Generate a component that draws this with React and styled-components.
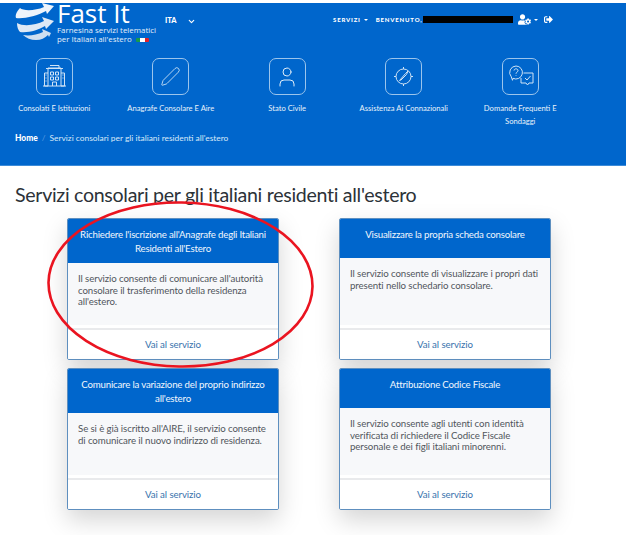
import React from 'react'
import styled, { createGlobalStyle } from 'styled-components'
import { ChevronDown, Pen, User } from 'lucide-react'
import { FaUserCog, FaSignOutAlt } from 'react-icons/fa'

const Global = createGlobalStyle`
  html, body { margin: 0; padding: 0; background: #fff; }
  body { font-family: "Lato", "Open Sans", sans-serif; }
`

const Page = styled.div`
  position: relative;
  width: 626px;
  height: 535px;
  overflow: hidden;
  padding-top: 3px;
  box-sizing: border-box;
`

const Hero = styled.header`
  background: #0066cc;
  height: 163px;
  color: #fff;
  border-bottom: 1px solid #3d8bd8;
  box-sizing: border-box;
`

const TopBar = styled.div`
  display: flex;
  align-items: flex-start;
  height: 44px;
  padding-left: 15px;
`

const Logo = styled.div`
  display: flex;
  width: 150px;
`

const LogoText = styled.div`
  display: flex;
  flex-direction: column;
`

const LogoName = styled.div`
  font-family: "Open Sans", sans-serif;
  font-size: 26px;
  line-height: 26px;
  height: 26px;
  margin-top: -3px;
  font-weight: 500;
`

const LogoSub = styled.div`
  font-family: "Open Sans", sans-serif;
  font-size: 7.9px;
  line-height: 9px;
  white-space: nowrap;
  color: #e6f0fa;
`

const Flag = styled.span`
  display: inline-block;
  width: 13px;
  height: 4px;
  margin-left: 4px;
  border-radius: 1px;
  background: linear-gradient(90deg, #1a9a4a 33%, #fff 33%, #fff 66%, #e0202a 66%);
`

const Lang = styled.div`
  display: flex;
  align-items: center;
  gap: 10px;
  padding-top: 13px;
  font-size: 7.5px;
  line-height: 10px;
  font-weight: 900;
  width: 168px;
`

const UserBar = styled.div`
  display: flex;
  align-items: center;
  padding-top: 10px;
  font-size: 6px;
  line-height: 9px;
  font-weight: 900;
  letter-spacing: 0.82px;
  white-space: nowrap;
`

const Caret = styled.span`
  display: inline-block;
  width: 0;
  height: 0;
  margin: 0 ${p => p.$right}px 0 3px;
  border-left: 2px solid transparent;
  border-right: 2px solid transparent;
  border-top: 2px solid #fff;
`

const Redacted = styled.span`
  display: block;
  width: 90px;
  height: 7px;
  background: #000;
  margin: 0 5px 0 1px;
`

const Nav = styled.nav`
  display: grid;
  grid-template-columns: repeat(5, 116.5px);
  margin-left: -4px;
  margin-top: 11px;
`

const NavItem = styled.a`
  display: flex;
  flex-direction: column;
  align-items: center;
  text-align: center;
  color: #fff;
`

const IconBox = styled.span`
  display: flex;
  align-items: center;
  justify-content: center;
  width: 35px;
  height: 35px;
  border: 1px solid #9cc5ec;
  border-radius: 7px;
`

const NavLabel = styled.span`
  margin-top: 7px;
  height: 25px;
  font-size: 7.6px;
  line-height: 12.5px;
  width: 100px;
  color: #e8f2fb;
`

const Crumbs = styled.div`
  display: flex;
  gap: 4px;
  margin: 5px 0 0 15px;
  font-size: 8.4px;
  line-height: 12px;
  color: #d9e9f8;
`

const CrumbHome = styled.strong`
  color: #fff;
  font-weight: 900;
`

const CrumbSep = styled.span`
  color: #5b9ce0;
`

const Title = styled.h1`
  margin: 16px 0 0 15px;
  height: 36px;
  font-size: 19.6px;
  line-height: 26px;
  font-weight: 400;
  letter-spacing: -0.3px;
  color: #2c3238;
  white-space: nowrap;
`

const Grid = styled.div`
  display: grid;
  grid-template-columns: repeat(2, 212px);
  grid-auto-rows: 142px;
  column-gap: 60px;
  row-gap: 8px;
  padding-left: 67px;
`

const Card = styled.article`
  display: flex;
  flex-direction: column;
  border: 1px solid #5e8fbf;
  border-radius: 2px;
  background: #fff;
  box-shadow: 0 10px 24px rgba(0, 0, 0, 0.17);
  overflow: hidden;
`

const CardHead = styled.h2`
  margin: 0;
  min-height: 39px;
  padding: 8px 6px 7px;
  box-sizing: border-box;
  background: #0066cc;
  color: #f1f7fd;
  font-size: 9.7px;
  line-height: 14.4px;
  letter-spacing: -0.2px;
  font-weight: 400;
  text-align: center;
`

const CardBody = styled.p`
  flex: 1;
  margin: 0 0 3px;
  padding: 10px 10px 0;
  background: #f7f8fa;
  color: #51565c;
  font-size: 9.7px;
  line-height: 11.7px;
  letter-spacing: -0.1px;
`

const CardFoot = styled.a`
  display: flex;
  align-items: center;
  justify-content: center;
  height: 31px;
  padding-bottom: 2px;
  box-sizing: border-box;
  border-top: 2px solid #e9eaec;
  background: #fff;
  color: #3873ad;
  font-size: 9.7px;
  letter-spacing: -0.1px;
`

const Circle = styled.svg`
  position: absolute;
  left: 0;
  top: 0;
  pointer-events: none;
`

const BuildingIcon = () => (
  <svg width="27" height="27" viewBox="0 0 27 27" fill="none" stroke="#cfe3f6" strokeWidth="1">
    <path d="M7 23V5h13v18M5 5.500h17M9 2.500h9v3" />
    <path d="M9.500 9h3v3h-3zM14.500 9h3v3h-3zM9.500 14h3v3h-3zM14.500 14h3v3h-3zM11.500 23v-4h4v4" />
    <path d="M7 10H3.500v13H7M20 10h3.500v13H20M2 23h23" />
    <path d="M21.500 12h1M4.500 12h1M4.500 15h1M4.500 18h1M21.500 15h1" />
  </svg>
)

const CompassIcon = () => (
  <svg width="21" height="21" viewBox="0 0 21 21" fill="none" stroke="#cfe3f6" strokeWidth="1">
    <circle cx="10.500" cy="10.500" r="7.500" />
    <path d="M6.500 14.500l6-7 2.500-2.500-1.500 3.500-5.500 5.500zM10.500 1v2M10.500 18v2M1 10.500h2M18 10.500h2" />
  </svg>
)

const FaqIcon = () => (
  <svg width="27" height="27" viewBox="0 0 27 27" fill="none" stroke="#cfe3f6" strokeWidth="1">
    <path d="M9 3a6.500 6.500 0 1 1-3 12.300l-.5 2 -1.200-3.500A6.500 6.500 0 0 1 9 3z" />
    <path d="M7 7.500c.2-2.300 4.200-2.200 4 .2-.1 1.400-2 1.500-2 3M9 12.200v.6" />
    <path d="M16.500 10H26v10h-4l-1.500 2-1.500-2h-5v-5" />
    <path d="M18 15l2 2 3.500-4" />
  </svg>
)

// globe of three swooshes, each ending in an arrow head on the right
const GlobeLogo = () => (
  <svg width="42" height="38" viewBox="0 0 42 38" fill="none" style={{ flexShrink: 0 }}>
    <path d="M39 3L27 0l2 4C20 8 8 8 5 5 2 8 0 12 1 15 9 16 22 13 31 8l1 3z" fill="#eef4fb" />
    <path d="M39 18L27 14l2 4C21 22 9 24 2 20c0 4 1 7 3 9 9 1 18-2 25-6l1 3z" fill="#dfe9f5" />
    <path d="M36 30l-9-4 1 3c-6 3-14 4-20 3 3 3 8 5 13 5 5 0 9-2 12-5l1 2z" fill="#cfdff0" />
  </svg>
)

const services = [
  {
    title: "Richiedere l'iscrizione all'Anagrafe degli Italiani Residenti all'Estero",
    text: "Il servizio consente di comunicare all'autorità consolare il trasferimento della residenza all'estero.",
  },
  {
    title: 'Visualizzare la propria scheda consolare',
    text: 'Il servizio consente di visualizzare i propri dati presenti nello schedario consolare.',
  },
  {
    title: "Comunicare la variazione del proprio indirizzo all'estero",
    text: "Se si è già iscritto all'AIRE, il servizio consente di comunicare il nuovo indirizzo di residenza.",
  },
  {
    title: 'Attribuzione Codice Fiscale',
    text: 'Il servizio consente agli utenti con identità verificata di richiedere il Codice Fiscale personale e dei figli italiani minorenni.',
  },
]

const links = [
  { label: 'Consolati E Istituzioni', icon: <BuildingIcon /> },
  { label: 'Anagrafe Consolare E Aire', icon: <Pen size={21} strokeWidth={1} color="#cfe3f6" /> },
  { label: 'Stato Civile', icon: <User size={24} strokeWidth={1} color="#e0edf9" /> },
  { label: 'Assistenza Ai Connazionali', icon: <CompassIcon /> },
  { label: 'Domande Frequenti E Sondaggi', icon: <FaqIcon /> },
]

export default function App() {
  return (
    <Page>
      <Global />
      <Hero>
        <TopBar>
          <Logo>
            <GlobeLogo />
            <LogoText>
              <LogoName>Fast It</LogoName>
              <LogoSub>Farnesina servizi telematici</LogoSub>
              <LogoSub>per Italiani all'estero<Flag /></LogoSub>
            </LogoText>
          </Logo>
          <Lang>
            ITA
            <ChevronDown size={9} strokeWidth={3} />
          </Lang>
          <UserBar>
            SERVIZI<Caret $right={8} />
            BENVENUTO,
            <Redacted />
            <FaUserCog size={13} />
            <Caret $right={6} />
            <FaSignOutAlt size={9} />
          </UserBar>
        </TopBar>
        <Nav>
          {links.map(link => (
            <NavItem key={link.label}>
              <IconBox>{link.icon}</IconBox>
              <NavLabel>{link.label}</NavLabel>
            </NavItem>
          ))}
        </Nav>
        <Crumbs>
          <CrumbHome>Home</CrumbHome>
          <CrumbSep>/</CrumbSep>
          <span>Servizi consolari per gli italiani residenti all'estero</span>
        </Crumbs>
      </Hero>
      <Title>Servizi consolari per gli italiani residenti all'estero</Title>
      <Grid>
        {services.map(item => (
          <Card key={item.title}>
            <CardHead>{item.title}</CardHead>
            <CardBody>{item.text}</CardBody>
            <CardFoot>Vai al servizio</CardFoot>
          </Card>
        ))}
      </Grid>
      <Circle width="626" height="535" viewBox="0 0 626 535" fill="none">
        <ellipse cx="180.500" cy="284.500" rx="132" ry="82" transform="rotate(1 180.500 284.500)" stroke="#ea1420" strokeWidth="2.600" />
      </Circle>
    </Page>
  )
}
